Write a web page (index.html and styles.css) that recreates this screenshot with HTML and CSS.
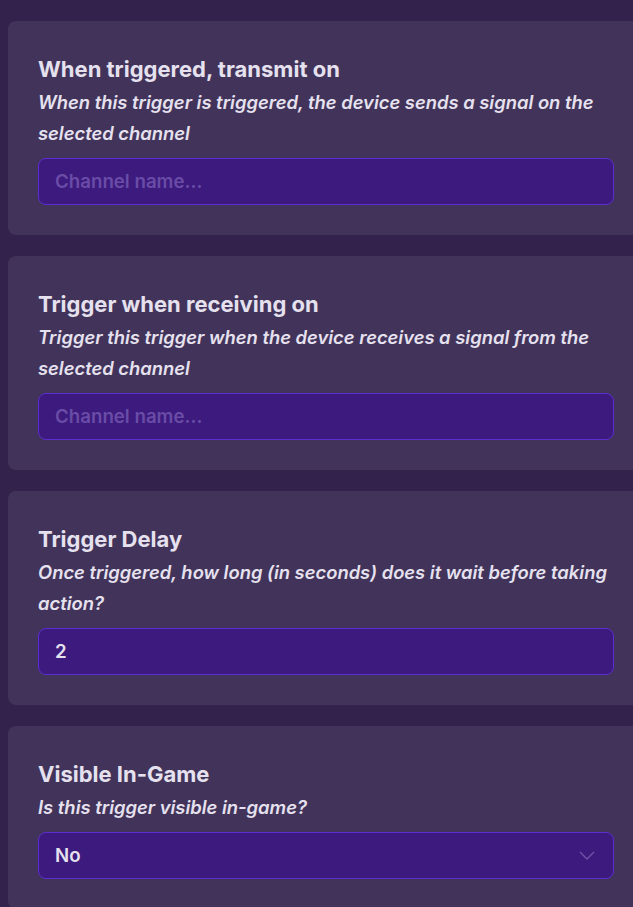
FILE: index.html
```html
<!DOCTYPE html>
<html lang="en">
<head>
<meta charset="utf-8">
<title>Trigger settings</title>
<link rel="stylesheet" href="styles.css">
</head>
<body>
<main class="list">
  <section class="card">
    <h2 class="title">When triggered, transmit on</h2>
    <p class="desc">When this trigger is triggered, the device sends a signal on the selected channel</p>
    <div class="field"><span class="placeholder">Channel name...</span></div>
  </section>
  <section class="card">
    <h2 class="title">Trigger when receiving on</h2>
    <p class="desc">Trigger this trigger when the device receives a signal from the selected channel</p>
    <div class="field"><span class="placeholder">Channel name...</span></div>
  </section>
  <section class="card">
    <h2 class="title">Trigger Delay</h2>
    <p class="desc">Once triggered, how long (in seconds) does it wait before taking action?</p>
    <div class="field"><span class="value">2</span></div>
  </section>
  <section class="card">
    <h2 class="title">Visible In-Game</h2>
    <p class="desc">Is this trigger visible in-game?</p>
    <div class="field select"><span class="value">No</span>
      <svg class="chevron" width="16" height="9" viewBox="0 0 16 9" fill="none"><path d="M1 1l7 7 7-7" stroke="#6f52a8" stroke-width="1.4"/></svg>
    </div>
  </section>
</main>
</body>
</html>
```
FILE: styles.css
```css
html, body {
  margin: 0;
  padding: 0;
  overflow: hidden;
}
body {
  background: #33234c;
  font-family: Inter, "Noto Sans", sans-serif;
  color: #e6e1ee;
}
.list {
  display: flex;
  flex-direction: column;
  gap: 21px;
  padding: 21px 0 0 8px;
}
.card {
  width: 576px;
  padding: 34px 30px 30px 30px;
  background: #41335a;
  border-radius: 8px;
  display: flex;
  flex-direction: column;
}
.title {
  margin: 0 0 4px 0;
  font-size: 22px;
  line-height: 28px;
  font-weight: 700;
  color: #e6e1ee;
}
.desc {
  margin: 0 0 9px 0;
  font-size: 18.4px;
  line-height: 31px;
  font-style: italic;
  font-weight: 600;
  color: #e6e1ee;
}
.field {
  height: 45px;
  border: 1px solid #5c2dcf;
  border-radius: 8px;
  background: #3c1a7e;
  display: flex;
  align-items: center;
  padding: 0 16px;
  font-size: 18.7px;
  font-weight: 600;
}
.placeholder {
  color: #6a4ca6;
}
.value {
  color: #e6e1ee;
}
.select {
  justify-content: space-between;
  padding-right: 18px;
}
```
